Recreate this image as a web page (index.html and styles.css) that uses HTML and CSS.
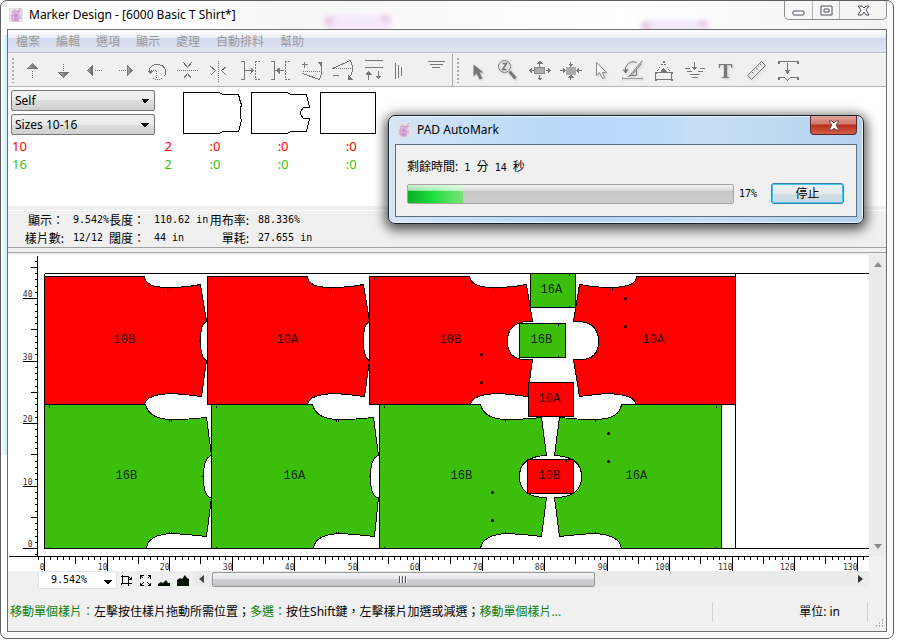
FILE: index.html
```html
<!DOCTYPE html>
<html lang="zh-Hant">
<head>
<meta charset="utf-8">
<title>Marker Design - [6000 Basic T Shirt*]</title>
<link rel="stylesheet" href="styles.css">
</head>
<body>
<svg class="defs" width="0" height="0" aria-hidden="true">
  <defs>
    <linearGradient id="shade" x1="0" x2="1" y1="0" y2="0">
      <stop offset="0" stop-color="#b4b4b4"/><stop offset="1" stop-color="#5c5c5c"/>
    </linearGradient>
    <pattern id="hatch" width="2" height="2" patternUnits="userSpaceOnUse">
      <rect width="1" height="1" fill="#666"/><rect x="1" y="1" width="1" height="1" fill="#666"/>
    </pattern>
    <symbol id="logo" viewBox="0 0 16 16">
      <rect x="1" y="1" width="14" height="14" rx="1" fill="#e2e0e3"/>
      <path d="M4 7h7v7H4z" fill="#dcb4dc"/>
      <path d="M4 4l4 1M6 2l3 3M13 1l-4 4 4-1M4 6h8M3 9l2-2M12 8v4M5 14h6M4 8v5" fill="none" stroke="#cf96d0" stroke-width="1"/>
      <path d="M6 9h4M6 12h4M7 7l2 1" stroke="#b878bc" fill="none"/>
    </symbol>
  </defs>
</svg>

<div class="window">
  <header class="titlebar">
    <svg class="logo" width="16" height="16" aria-hidden="true"><use href="#logo"/></svg>
    <h1>Marker Design - [6000 Basic T Shirt*]</h1>
    <div class="glass glass-a"></div>
    <div class="glass glass-b"></div>
    <div class="caption-buttons">
      <button aria-label="Minimize"><svg width="13" height="13"><rect x="1" y="7" width="11" height="4" rx="1" fill="#fff" stroke="#4c4f5c"/></svg></button>
      <button aria-label="Restore"><svg width="13" height="13"><path d="M1 2h11v9H1z" fill="#fff" stroke="#4c4f5c"/><path d="M4 5h5v3H4z" fill="#fff" stroke="#4c4f5c"/></svg></button>
      <button class="wide" aria-label="Close"><svg width="13" height="13"><path d="M1 2h4l2 2 2-2h3L9 6l3 5H9L7 8l-2 3H1l3-5z" fill="#fff" stroke="#4c4f5c"/></svg></button>
    </div>
  </header>

  <div class="client">
    <nav class="menubar">
      <button>檔案</button><button>編輯</button><button>選項</button><button>顯示</button><button>處理</button><button>自動排料</button><button>幫助</button>
    </nav>

    <div class="toolbars">
      <div class="toolbar">
        <span class="grip"></span>
        <button aria-label="Up"><svg viewBox="-15.5 -12.5 31 25"><path class="sh" d="M0-7L5-2H-5z"/><path class="dot" d="M0 0V8"/></svg></button>
        <button aria-label="Down"><svg viewBox="-15.5 -12.5 31 25"><path class="sh" d="M0 7L5 2H-5z"/><path class="dot" d="M0-7V2"/></svg></button>
        <button aria-label="Left"><svg viewBox="-15.5 -12.5 31 25"><path class="sh" d="M-7 0L-2-5V5z"/><path class="dot" d="M0 0H8"/></svg></button>
        <button aria-label="Right"><svg viewBox="-15.5 -12.5 31 25"><path class="sh" d="M7 0L2-5V5z"/><path class="dot" d="M-7 0H2"/></svg></button>
        <button aria-label="Rotate"><svg viewBox="-15.5 -12.5 31 25"><path class="ln" d="M-7 0V-2A9 8 0 0 1 9-1V3"/><path class="dot" d="M9 3A9 8 0 0 1-4 8M0 0V8M-6 0H0"/><path class="fl" d="M-10 0H-3L-6 4z"/></svg></button>
        <button aria-label="Flip vertical"><svg viewBox="-15.5 -12.5 31 25"><path class="ln" d="M-4-8L0-3 4-8M-4 8L0 3 4 8"/><path class="dot" d="M-11 0H11"/></svg></button>
        <button aria-label="Flip horizontal"><svg viewBox="-15.5 -12.5 31 25"><path class="ln" d="M-8-4L-3 0-8 5M8-4L3 0 8 5"/><path class="dot" d="M0-10V11"/></svg></button>
        <button aria-label="Butt right"><svg viewBox="-15.5 -12.5 31 25"><path class="ln" d="M-9-9H-5V9H-9M-5 0H2"/><path class="fl" d="M1-3V3L5 0z"/><path class="dash" d="M10-9H6V9H10"/></svg></button>
        <button aria-label="Butt left"><svg viewBox="-15.5 -12.5 31 25"><path class="ln" d="M-10-9H-6V9H-10M-3 0H3"/><path class="fl" d="M-1-3V3L-5 0z"/><path class="dash" d="M9-9H5V9H9"/></svg></button>
        <button aria-label="Tilt up"><svg viewBox="-15.5 -12.5 31 25"><path class="ln" d="M-10-6H-4M-7-9V-3M-9 3L8 9Q12 0 9-6"/><path class="dot" d="M-9 1H9"/><path class="fl" d="M5-9H10V-4z"/></svg></button>
        <button aria-label="Tilt down"><svg viewBox="-15.5 -12.5 31 25"><path class="ln" d="M-10 5H-4M-10-2L8-10Q12-2 8 6"/><path class="dot" d="M-9-2H9"/><path class="fl" d="M5 4V9H10z"/></svg></button>
        <button aria-label="Align rows"><svg viewBox="-15.5 -12.5 31 25"><path class="ln" d="M-9-10H9M-9-3H9M-5 9V2M5 0V7"/><path class="fl" d="M-8 4L-5 0-2 4zM2 5H8L5 9z"/></svg></button>
        <button aria-label="Sort columns"><svg viewBox="-15.5 -12.5 31 25"><path class="ln" d="M-9-8V8M-6-6V7M-3-4V5"/></svg></button>
        <button aria-label="Sort rows"><svg viewBox="-15.5 -12.5 31 25"><path class="ln" d="M-8-9H9M-6-6H7M-4-3H4"/></svg></button>
      </div>
      <div class="toolbar">
        <span class="grip"></span>
        <button aria-label="Select"><svg class="soft" viewBox="-15.5 -12.5 31 25"><path d="M-4-6V6L-1 3 2 9 5 8 2 2H6z" fill="#777"/></svg></button>
        <button aria-label="Zoom"><svg class="soft" viewBox="-15.5 -12.5 31 25"><g fill="none" stroke="#777"><circle cx="-4" cy="-4" r="6"/><path d="M-6-7H-2L-6-1H-2" stroke-width="1.5"/><path d="M1 1L7 8" stroke-width="3"/></g></svg></button>
        <button aria-label="Spread"><svg viewBox="-15.5 -12.5 31 25"><path d="M-5-3H5V3H-5z" fill="url(#hatch)" stroke="#888"/><path class="ln" d="M-10 0H-6M6 0H10M0-8V-4M0 4V9"/><path class="fl" d="M-11 0L-8-3V3zM11 0L8-3V3zM0-10L-3-7H3zM0 10L-3 7H3z"/></svg></button>
        <button aria-label="Compact"><svg viewBox="-15.5 -12.5 31 25"><path d="M-5-4H5V4H-5z" fill="url(#hatch)"/><path class="ln" d="M-11 0H-6M6 0H11M0-9V-4M0 4V9"/><path class="fl" d="M-5 0L-8-3V3zM5 0L8-3V3zM0-4L-3-7H3zM0 4L-3 7H3z"/></svg></button>
        <button aria-label="Pick"><svg class="soft" viewBox="-15.5 -12.5 31 25"><path d="M-5-8V5L-2 2 1 8 3 7 1 2H5z" fill="#f6f6f6" stroke="#888"/></svg></button>
        <button aria-label="Edit rotation"><svg class="soft" viewBox="-15.5 -12.5 31 25"><path d="M-7 0V-3Q-3-11 4-8M10-10L-2 4-4 6 0 4 9-7M4 0L4 5-1 5" fill="none" stroke="#777"/><path class="fl" d="M-10-1H-4L-7 3z"/><path d="M-10 8H10M-10 7V9M10 7V9" stroke="#999" fill="none"/></svg></button>
        <button aria-label="Anchor"><svg viewBox="-15.5 -12.5 31 25"><path class="dot" d="M0-8L-7 1M0-8L7 1"/><path class="ln" d="M-8 2H8V9H-8zM0 2V0"/><path class="fl" d="M-9 1h2v2h-2zM7 1h2v2H7zM-9 8h2v2h-2zM7 8h2v2H7zM-1-10h2v2h-2zM-3 1L0-3 3 1z"/></svg></button>
        <button aria-label="Drop"><svg viewBox="-15.5 -12.5 31 25"><path class="ln" d="M0-9V-3M-10-2H-5M5-2H10M-8 1H-3M3 1H8M-5 4H5M-3 7H3"/><path class="fl" d="M-3-4H3L0 0z"/></svg></button>
        <button aria-label="Text"><svg class="soft" viewBox="-15.5 -12.5 31 25"><text x="0" y="7" text-anchor="middle" class="tee">T</text></svg></button>
        <button aria-label="Measure"><svg class="soft" viewBox="-15.5 -12.5 31 25"><path d="M-9 5L5-9 9-5-5 9zM-5 1l2 2M-3-1l1 1M-1-3l2 2M1-5l1 1M3-7l2 2" fill="none" stroke="#777"/></svg></button>
        <button aria-label="Gap"><svg viewBox="-15.5 -12.5 31 25"><path class="ln" d="M-10-9H10M0-8V0M-10 7H-3L0 10 3 7H10"/><path class="fl" d="M-3-1H3L0 4zM-10-10h2v3h-2zM9-10h2v3H9zM-10 6h2v3h-2zM9 6h2v3H9z"/></svg></button>
      </div>
    </div>

    <section class="pieces">
      <div class="piece-top">
        <div class="selectors">
          <select class="combo" aria-label="Material"><option>Self</option></select>
          <select class="combo" aria-label="Sizes"><option>Sizes 10-16</option></select>
        </div>
        <div class="thumbs">
          <svg width="60" height="44" viewBox="-.5 -.5 60 44"><path d="M0 1H36L39 3H55L57 11 58 13 57 17V26L58 29 55 40H39L36 42H0z"/></svg>
          <svg width="60" height="44" viewBox="-.5 -.5 60 44"><path d="M0 1H36L39 3H55L58 16H52L49 20V23L52 27H58L55 40H39L36 42H0z"/></svg>
          <svg width="60" height="44" viewBox="-.5 -.5 60 44"><path d="M1 1H56V42H1z"/></svg>
        </div>
      </div>
      <table class="sizes">
        <colgroup><col class="c-size"><col class="c-qty"><col class="c-piece"><col class="c-piece"><col class="c-piece"></colgroup>
        <tbody>
          <tr class="red"><td>10</td><td>2</td><td>:0</td><td>:0</td><td>:0</td></tr>
          <tr class="green"><td>16</td><td>2</td><td>:0</td><td>:0</td><td>:0</td></tr>
        </tbody>
      </table>
    </section>

    <dl class="info">
      <dt>顯示：</dt><dd>9.542%</dd><dt>長度：</dt><dd>110.62 in</dd><dt>用布率:</dt><dd>88.336%</dd>
      <dt>樣片數:</dt><dd>12/12</dd><dt>闊度：</dt><dd>44 in</dd><dt>單耗:</dt><dd>27.655 in</dd>
    </dl>

    <main class="workspace">
      <div class="marker">
        <svg width="861" height="316" viewBox="7.5 254.5 861 316" role="img" aria-label="Marker layout">
          <g class="frame"><path d="M44 273H869M44 548H869M735 273V548M44 273V548"/></g>
          <g class="r">
            <path d="M44 276H144Q145 287 167 287Q185 287 200 284L206 321Q200 323 200 340Q200 358 206 360L201 396Q185 394 172 393Q145 394 144 404H44z"/>
            <path d="M207 276H307Q308 287 330 287Q348 287 363 284L369 321Q363 323 363 340Q363 358 369 360L364 396Q348 394 335 393Q308 394 307 404H207z"/>
            <path d="M369 276H469Q471 287 493 287Q511 287 526 284L532 321H525Q507 323 507 341Q507 359 525 359H532L527 396Q511 394 498 393Q471 394 470 404H369z"/>
            <path d="M735 276H636Q636 287 608 287Q594 287 579 284L573 321H580Q598 323 598 341Q598 359 580 359H573L579 396Q594 394 606 393Q635 394 635 404H735z"/>
          </g>
          <g class="g">
            <path d="M44 404H145Q149 419 171 419Q188 419 206 417L211 455Q203 457 203 476Q203 497 211 497L206 536Q190 534 172 533Q147 534 146 548H44z"/>
            <path d="M211 404H312Q316 419 338 419Q355 419 373 417L378 455Q370 457 370 476Q370 497 378 497L374 536Q358 534 340 533Q314 534 313 548H211z"/>
            <path d="M379 404H480Q484 419 506 419Q523 419 541 417L546 455Q519 456 519 476Q519 497 546 497L541 536Q525 534 507 533Q482 534 480 548H379z"/>
            <path d="M721 404H621Q619 419 594 419Q577 419 559 417L554 455Q581 456 581 476Q581 497 554 497L559 536Q575 534 593 533Q619 534 621 548H721z"/>
          </g>
          <g class="g"><path d="M530 273H575V307H530z"/><path d="M519 323H565V357H519z"/></g>
          <g class="r"><path d="M528 382H573V416H528z"/><path d="M527 459H573V493H527z"/></g>
          <g class="frame">
            <path d="M49 277V279M211 277V279M374 277V279M731 277V279M49 402V407M211 402V407M374 402V404M216 405V407M384 405V407M716 405V407M731 402V404M167 287V290M169 287V290M329 287V290M331 287V290M493 287V290M612 287V290M167 393V391M169 393V391M329 393V391M331 393V391M493 393V391M612 393V391M169 419V421M171 419V421M336 419V421M338 419V421M505 419V421M595 419V421M169 533V531M171 533V531M336 533V531M338 533V531M505 533V531M595 533V531M49 548V546M216 548V546M384 548V546M716 548V546M198 340H200M361 340H363M200 476H203M368 476H370M569 273V275M569 307V305M558 323V325M558 357V355M567 382V384M567 416V414M566 459V461M566 493V491"/>
          </g>
          <g class="drill">
            <circle cx="481" cy="354" r="1.5"/><circle cx="481" cy="382" r="1.5"/><circle cx="625" cy="298" r="1.5"/><circle cx="625" cy="326" r="1.5"/>
            <circle cx="492" cy="492" r="1.5"/><circle cx="492" cy="520" r="1.5"/><circle cx="608" cy="433" r="1.5"/><circle cx="608" cy="461" r="1.5"/>
          </g>
          <g class="label">
            <text x="113" y="342">10B</text><text x="276" y="342">10A</text><text x="439" y="342">10B</text><text x="642" y="342">10A</text>
            <text x="115" y="478">16B</text><text x="283" y="478">16A</text><text x="450" y="478">16B</text><text x="625" y="478">16A</text>
            <text x="540" y="292">16A</text><text x="530" y="342">16B</text><text x="538" y="401">10A</text><text x="538" y="478">10B</text>
          </g>
          <path class="axis" d="M37 255V556M8 556H869"/>
          <g id="rulers"></g>
        </svg>
      </div>
      <div class="vscroll" aria-hidden="true"><svg width="8" height="5"><path d="M4 0L8 5H0z" fill="#888"/></svg><svg width="8" height="5"><path d="M0 0H8L4 5z" fill="#888"/></svg></div>
    </main>

    <div class="viewbar">
      <select class="zoom" aria-label="Zoom level"><option>9.542%</option></select>
      <button aria-label="Zoom to area"><svg width="13" height="13" viewBox="-.5 -.5 13 13"><path class="k" d="M2 2H8V9H2zM0 2H2M2 0V2M8 9V11M8 9H11M0 9H2M0 11L2 9M8 2L11 5M8 5H11V2"/></svg></button>
      <button aria-label="Fit all"><svg width="13" height="13" viewBox="-.5 -.5 13 13"><path class="k" d="M1 1L4 4M1 1H4M1 1V4M11 1L8 4M11 1H8M11 1V4M1 11L4 8M1 11H4M1 11V8M11 11L8 8M11 11H8M11 11V8"/></svg></button>
      <button aria-label="Zoom out"><svg width="13" height="13"><path d="M0 12V10L3 8 5 9 8 6 10 9 12 9V12z" fill="#041204"/></svg></button>
      <button aria-label="Zoom in"><svg width="13" height="13"><path d="M0 12V6L3 4 5 5 8 1 10 4 12 5V12z" fill="#041204"/></svg></button>
      <div class="hscroll" aria-hidden="true">
        <svg width="5" height="8"><path d="M5 0V8L0 4z" fill="#444"/></svg>
        <div class="track"><div class="thumb"><i></i><i></i><i></i></div></div>
        <svg width="5" height="8"><path d="M0 0V8L5 4z" fill="#333"/></svg>
      </div>
    </div>

    <footer class="status">
      <p><span>移動單個樣片：</span>左擊按住樣片拖動所需位置；<span>多選：</span>按住Shift鍵，左擊樣片加選或減選；<span>移動單個樣片...</span></p>
      <div class="unit">單位: in</div>
      <svg class="sizegrip" width="9" height="9" aria-hidden="true"><path d="M7 1h1M4 4h1M7 4h1M1 7h1M4 7h1M7 7h1" stroke="#aaa" stroke-width="2"/></svg>
    </footer>
  </div>

  <section class="dialog" role="dialog" aria-labelledby="dlg-title">
    <header>
      <svg class="logo" width="16" height="16" aria-hidden="true"><use href="#logo"/></svg>
      <h2 id="dlg-title">PAD AutoMark</h2>
      <button class="close" aria-label="Close"><svg width="12" height="11"><path d="M1 1h3l2 2 2-2h3L8 5l3 5H8L6 8l-2 2H1l3-5z" fill="#fff" stroke="#6b4a4a"/></svg></button>
    </header>
    <div class="dialog-body">
      <label for="job">剩餘時間: <span>1</span> 分 <span>14</span> 秒</label>
      <div class="job-row">
        <progress id="job" max="100" value="17"></progress>
        <span class="pct">17%</span>
        <button class="stop">停止</button>
      </div>
    </div>
  </section>
</div>
<script src="script.js"></script>
</body>
</html>
```
FILE: styles.css
```css
* { box-sizing: border-box; }
body {
  margin: 0;
  padding: 0 3px 3px 0;
  min-height: 100vh;
  display: flex;
  background: #fff;
  color: #000;
  font: 12px/16px "Noto Sans", "Noto Sans CJK TC", sans-serif;
}
button, select { font: inherit; color: inherit; }
button { margin: 0; padding: 0; border: 0; background: none; }
h1, h2, p, dl, dd { margin: 0; font: inherit; }
.defs { position: absolute; }

.window {
  position: relative;
  flex: 1;
  display: flex;
  flex-direction: column;
  padding: 0 6px 6px;
  border: 1px solid #5f5f5f;
  border-radius: 7px;
  background: linear-gradient(90deg, #fff, #c9eef7) 0 34px / 6px 420px no-repeat, #fdfdfd;
}
.titlebar {
  position: relative;
  display: flex;
  align-items: center;
  gap: 5px;
  height: 28px;
  padding-left: 1px;
  overflow: hidden;
  background: linear-gradient(90deg, #fff 20%, #f6f6f6 32%, #fff 70%, #f3f3f3);
}
.titlebar h1 { flex: 1; }
.logo { flex: none; }
.glass {
  position: absolute;
  width: 68px;
  height: 16px;
  border-radius: 6px;
  background: radial-gradient(circle at 5px 6px, #e3bcd8, transparent 7px), radial-gradient(circle at 62px 2px, #e3bcd8, transparent 7px), #f4e8fb;
  filter: blur(2px);
}
.glass-a { left: 36%; top: 14px; }
.glass-b { left: 72%; top: 19px; }
.caption-buttons {
  display: flex;
  align-self: flex-start;
  border: 1px solid #8d8d8d;
  border-top: 0;
  border-radius: 0 0 5px 5px;
}
.caption-buttons button {
  display: grid;
  place-items: center;
  width: 27px;
  height: 18px;
}
.caption-buttons button + button { border-left: 1px solid #b5b5b5; }
.caption-buttons .wide { width: 47px; }

.client {
  flex: 1;
  display: flex;
  flex-direction: column;
  border: 1px solid #6d6d6d;
  background: #f0f0f0;
}
.menubar {
  display: flex;
  gap: 16px;
  height: 23px;
  padding: 2px 8px 0;
  border-bottom: 1px solid #b4bacb;
  background: linear-gradient(#fff 0, #e9edf6 8px, #d3d9ed 8px, #e0e5f4 22px);
  color: #999;
}
.toolbars {
  display: flex;
  height: 34px;
  border-bottom: 1px solid #b2b2b2;
  border-top: 1px solid #fff;
}
.toolbar { display: flex; align-items: center; }
.toolbar + .toolbar { border-left: 1px solid #a8a8a8; margin-left: 1px; }
.toolbar button { width: 31px; height: 25px; }
.toolbar svg { display: block; width: 31px; height: 25px; shape-rendering: crispEdges; }
.toolbar .soft { shape-rendering: auto; filter: drop-shadow(1px 1px 1px #ccc); }
.grip {
  width: 9px;
  height: 26px;
  background: radial-gradient(circle, #aaa 1px, transparent 1px) 3px 0 / 4px 4px repeat-y;
}
.sh { fill: url(#shade); stroke: #777; }
.fl { fill: #777; }
.ln, .dot, .dash { fill: none; stroke: #777; }
.dot { stroke-dasharray: 1 1; }
.dash { stroke-dasharray: 2 1; }
.tee { font: bold 21px "Liberation Serif", serif; fill: #777; }

.pieces { height: 119px; padding: 3px; background: #fff; }
.piece-top { display: flex; gap: 28px; }
.selectors { display: flex; flex-direction: column; gap: 3px; }
.combo, .zoom {
  appearance: none;
  border-radius: 2px;
  padding: 0 3px;
}
.combo {
  width: 144px;
  height: 21px;
  border: 1px solid #777;
  background:
    conic-gradient(from 315deg at 50% 100%, #000 90deg, transparent 0) right 5px top 8px / 8px 4px no-repeat,
    linear-gradient(#f2f2f2, #ebebeb 50%, #ddd 50%, #cfcfcf);
}
.thumbs { display: flex; gap: 8px; padding-top: 1px; }
.thumbs svg { fill: none; stroke: #000; shape-rendering: crispEdges; }
.sizes {
  table-layout: fixed;
  width: 402px;
  margin: 2px 0 0 1px;
  border-collapse: collapse;
  font-size: 13px;
  line-height: 18px;
}
.sizes td { padding: 0; }
.c-size { width: 152px; }
.c-qty { width: 45px; }
.c-piece { width: 68px; }
.red { color: #f00; }
.green { color: #3cbf0a; }

.info {
  display: grid;
  grid-template-columns: 56px 45px 36px 63px 41px 90px;
  align-content: center;
  height: 38px;
  margin-top: 4px;
  border-top: 1px solid #fff;
  border-bottom: 1px solid #a0a0a0;
  line-height: 18px;
  white-space: nowrap;
}
.info dt { font-family: "Noto Sans CJK TC", sans-serif; text-align: right; }
.info dd { padding-left: 9px; font: 10px/18px "DejaVu Sans Mono", monospace; }

.workspace {
  display: flex;
  margin-top: 4px;
  border-top: 1px solid #a0a0a0;
  padding-top: 2px;
}
.marker { flex: 1; min-width: 0; overflow: hidden; background: #fff; }
.marker svg { display: block; }
.marker path { shape-rendering: crispEdges; stroke: #000; }
.frame, .axis { fill: none; }
.drill { fill: #000; }
.r { fill: #f00; }
.g { fill: #3cbf0a; }
.label { font: 12px "Liberation Mono", monospace; fill: #000; fill-opacity: .85; }
.ruler-text { font: 8px "DejaVu Sans Mono", monospace; fill: #333; text-anchor: end; }
.vscroll {
  display: flex;
  flex-direction: column;
  justify-content: space-between;
  align-items: center;
  width: 17px;
  margin-bottom: 15px;
  padding: 7px 0;
  background: #ebebeb;
}

.viewbar { display: flex; height: 18px; padding: 0 17px 0 30px; }
.viewbar button { width: 19px; display: grid; place-items: center; }
.k { fill: none; stroke: #000; shape-rendering: crispEdges; }
.zoom {
  width: 79px;
  padding: 0 12px;
  border: 1px solid #e0e3ea;
  background: conic-gradient(from 315deg at 50% 100%, #000 90deg, transparent 0) right 4px top 8px / 8px 4px no-repeat, #fff;
  font: 10px/14px "DejaVu Sans Mono", monospace;
}
.hscroll {
  flex: 1;
  display: flex;
  align-items: center;
  gap: 8px;
  height: 16px;
  padding: 0 6px;
  background: #ebebeb;
}
.track { flex: 1; }
.thumb {
  display: flex;
  justify-content: center;
  align-items: center;
  gap: 1px;
  width: 60%;
  height: 15px;
  border: 1px solid #979797;
  border-radius: 2px;
  background: linear-gradient(#f3f3f3, #e6e6e8 50%, #cfd0d3 50%, #c4c5c9);
}
.thumb i { width: 2px; height: 7px; border-left: 1px solid #555; background: #fff; }

.status {
  flex: 1;
  display: flex;
  align-items: center;
  padding: 6px 2px 3px;
}
.status p { flex: 1; white-space: nowrap; overflow: hidden; }
.status p span { color: #0a7d0a; }
.unit {
  width: 156px;
  padding: 2px 27px 2px 0;
  border-left: 1px solid #d2d2d2;
  border-right: 1px solid #d2d2d2;
  text-align: right;
}
.sizegrip { align-self: flex-end; margin-left: 7px; }

.dialog {
  position: absolute;
  left: 387px;
  top: 114px;
  width: 476px;
  padding: 0 6px 6px;
  border: 1px solid #16222c;
  border-radius: 7px;
  background: linear-gradient(90deg, #d6e6f7, #b7d8f8 35%, #b9dafb 55%, #c9dff5 65%, #b4d1ee);
  box-shadow: inset 0 0 0 1px #eaf5ff, 0 3px 12px 3px rgba(0, 0, 0, .65);
}
.dialog header {
  display: flex;
  align-items: center;
  gap: 5px;
  height: 28px;
  padding-left: 1px;
}
.dialog h2 { flex: 1; font-size: 12px; }
.close {
  display: grid;
  place-items: center;
  align-self: flex-start;
  width: 47px;
  height: 19px;
  border: 1px solid #5b2a2a;
  border-top: 0;
  border-radius: 0 0 4px 4px;
  background: linear-gradient(#dfa399, #d0776b 45%, #b92d1a 50%, #d1604a);
}
.dialog-body {
  padding: 14px 12px 12px 11px;
  border: 1px solid #5d6e7e;
  background: #f0f0f0;
}
.dialog-body label { display: block; margin-bottom: 8px; line-height: 16px; }
.dialog-body label span, .pct { font: 10px "DejaVu Sans Mono", monospace; }
.dialog-body label span { margin: 0 3px; }
.job-row { display: flex; align-items: center; gap: 5px; }
progress {
  appearance: none;
  flex: 1;
  min-width: 0;
  height: 20px;
  border: 1px solid #a5a5a5;
  border-radius: 2px;
  overflow: hidden;
}
progress::-webkit-progress-bar { background: linear-gradient(#f4f4f4, #dcdcdc 30%, #c8c8c8 35%, #cdcdcd); }
progress::-webkit-progress-value {
  background: linear-gradient(rgba(255, 255, 255, .8), rgba(255, 255, 255, .6) 30%, transparent 35%), linear-gradient(90deg, #0bae24, #1fdc3f 45%, #7be27b);
}
.pct { width: 27px; }
.stop {
  width: 73px;
  height: 21px;
  border: 1px solid #3c7fb1;
  border-radius: 3px;
  background: linear-gradient(#f0f2f3, #e4e9ec 50%, #d2dde3 50%, #c8d8e2);
  box-shadow: inset 0 0 0 1px #46c8f0;
  line-height: 16px;
}
```
FILE: script.js
```js
const NS = 'http://www.w3.org/2000/svg';
const rulers = document.getElementById('rulers');
const PX_PER_INCH = 6.25;
const ORIGIN = { x: 44, y: 548 };

function tickLength(n, lengths) {
  if (n % 10 === 0) return lengths[2];
  return n % 5 === 0 ? lengths[1] : lengths[0];
}

function addLabel(x, y, value) {
  const text = document.createElementNS(NS, 'text');
  text.setAttribute('x', x);
  text.setAttribute('y', y);
  text.setAttribute('class', 'ruler-text');
  text.textContent = value;
  rulers.append(text);
}

let d = '';
for (let n = -1; n <= 46; n++) {
  const y = Math.round(ORIGIN.y - n * PX_PER_INCH);
  d += `M37 ${y}h-${tickLength(n, [3, 7, 15])}`;
  if (n % 10 === 0) addLabel(32, y - 2, n);
}
for (let n = -1; n <= 131; n++) {
  const x = Math.round(ORIGIN.x + n * PX_PER_INCH);
  d += `M${x} 556v${tickLength(n, [3, 7, 14])}`;
  if (n % 10 === 0) addLabel(x, 569, n);
}
const path = document.createElementNS(NS, 'path');
path.setAttribute('d', d);
rulers.append(path);
```
